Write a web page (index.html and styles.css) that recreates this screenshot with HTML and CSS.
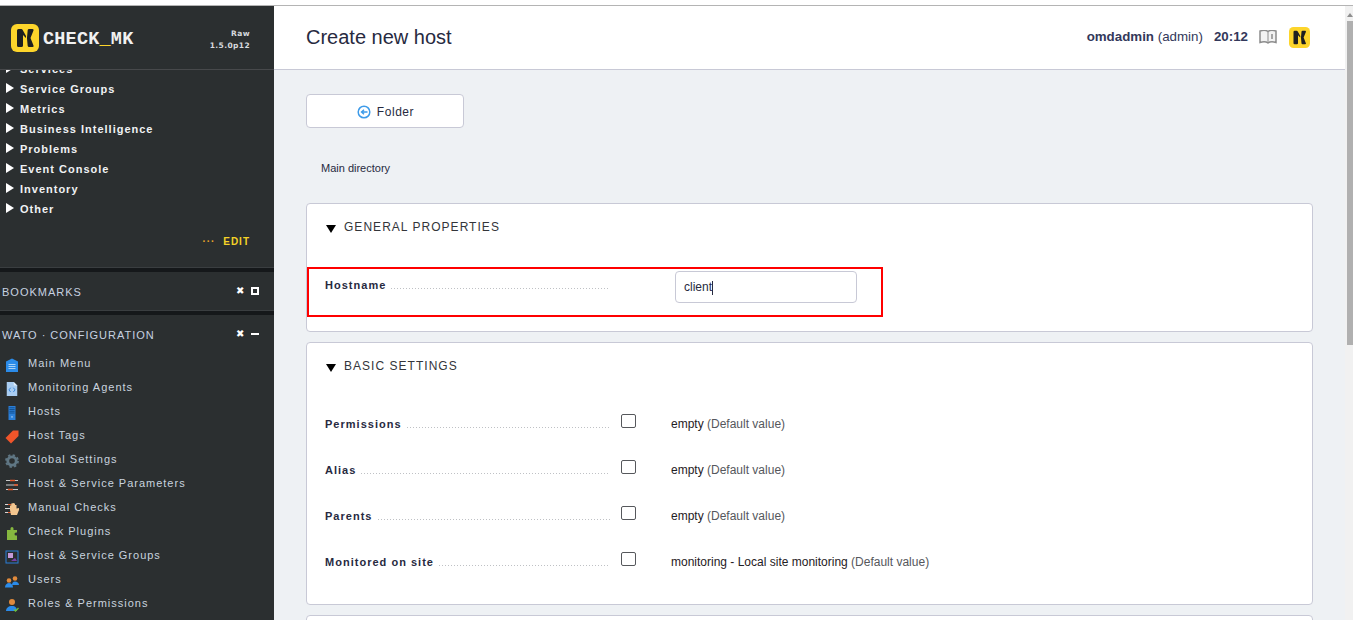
FILE: index.html
```html
<!DOCTYPE html>
<html lang="en">
<head>
    <meta charset="UTF-8">
    <title>Create new host</title>
    <link rel="stylesheet" href="styles.css">
</head>
<body>
    <div class="app">
        <aside class="sidebar">
            <div class="side-head">
                <svg class="logo" viewBox="0 0 28 28"><rect width="28" height="28" rx="6" fill="#fdd52b"/><path d="M6 6.500Q6 5 7.500 5h2.700q1 0 1.500 1L15 12v2l-3-3v10.500q0 1.500-1.500 1.500h-3Q6 23 6 21.500z" fill="#1d1f20"/><path d="M18 5h3.500q1.500 0 1 1.500L19.500 14l3 7.500q.500 1.500-1 1.500H18q-1 0-1.300-1L16 14.500v-1l.700-7.500Q17 5 18 5z" fill="#1d1f20"/></svg>
                <div class="brand">CHECK<span class="under">_</span>MK</div>
                <div class="version">Raw<br>1.5.0p12</div>
            </div>
            <div class="side-scroll">
                <ul class="views">
                    <li>Services</li>
                    <li>Service Groups</li>
                    <li>Metrics</li>
                    <li>Business Intelligence</li>
                    <li>Problems</li>
                    <li>Event Console</li>
                    <li>Inventory</li>
                    <li>Other</li>
                </ul>
                <div class="edit"><span class="dots">···</span> EDIT</div>
                <div class="separator"></div>
                <div class="snapin-title bookmarks">
                    <span>BOOKMARKS</span>
                    <span class="snapin-btns"><i class="close">✖</i><i class="square"></i></span>
                </div>
                <div class="separator"></div>
                <div class="snapin-title wato">
                    <span>WATO · CONFIGURATION</span>
                    <span class="snapin-btns"><i class="close">✖</i><i class="dash"></i></span>
                </div>
                <ul class="wato-menu">
                    <li><svg viewBox="0 0 14 14"><path d="M7 .5 13 3.500V14H1V3.500z" fill="#2b8be8"/><path d="M3.500 6.500h7M3.500 8.500h7M3.500 10.500h7" stroke="#a9d2f7"/></svg>Main Menu</li>
                    <li><svg viewBox="0 0 14 16"><path d="M1 0h8l4 4v12H1z" fill="#a9cdf2"/><path d="M9 0l4 4H9z" fill="#e4f0fb"/><path d="M5.500 6.500 3.500 9l2 2.500M8.500 6.500l2 2.500-2 2.500" stroke="#2b7fd8" fill="none"/></svg>Monitoring Agents</li>
                    <li><svg viewBox="0 0 14 16"><rect x="3" width="8" height="16" fill="#2b7fd8"/><path d="M4 2h6M4 4h6M4 6h6M4 8h6" stroke="#0f4c8c"/><rect x="6" y="12" width="2" height="1" fill="#cfe4fa"/></svg>Hosts</li>
                    <li><svg viewBox="0 0 14 14"><path d="M8 .5h5.500V6L6 13.500.5 8z" fill="#f0552a"/></svg>Host Tags</li>
                    <li><svg viewBox="0 0 14 14"><circle cx="7" cy="7" r="4.200" fill="none" stroke="#5f7683" stroke-width="2.800"/><circle cx="7" cy="7" r="6" fill="none" stroke="#5f7683" stroke-width="1.800" stroke-dasharray="2.400 2.300"/></svg>Global Settings</li>
                    <li><svg viewBox="0 0 14 14"><path d="M1 2.500h12M1 7h12M1 11.500h12" stroke="#c9c9c9"/><path d="M5 2.500h5M9 7h4M3 11.500h5" stroke="#e0562a" stroke-width="1.500"/></svg>Host &amp; Service Parameters</li>
                    <li><svg viewBox="0 0 14 14"><path d="M0 2.500h6M0 6.500h6M0 10.500h6" stroke="#d8d8d8"/><path d="M3 2.500h3M3 10.500h3" stroke="#e0562a"/><path d="M6 13 5 8V3.500h1.200V1.500h1.300V1h1.300v.5H10V3h1.500v3.500L14 6v2l-2 5z" fill="#f3c68f"/></svg>Manual Checks</li>
                    <li><svg viewBox="0 0 14 14"><path d="M2 4h3.500V2.500q0-1.500 1.500-1.500t1.500 1.500V4H12v2.500h-1q-1.500 0-1.500 1.500t1.500 1.500h1V14H2z" fill="#86b83f"/></svg>Check Plugins</li>
                    <li><svg viewBox="0 0 14 14"><rect x="1" y="1" width="12" height="12" fill="#2b2f30" stroke="#2b7fd8"/><rect x="3" y="3" width="5" height="5" fill="#c69ad8"/><path d="M6 11l4-3 2 3z" fill="#7b3fa8"/></svg>Host &amp; Service Groups</li>
                    <li><svg viewBox="0 0 14 14"><circle cx="4" cy="6.500" r="2.300" fill="#e08a3c"/><circle cx="10" cy="4.500" r="2.300" fill="#e08a3c"/><path d="M7 11c0-2 1-3.500 3-3.500s4 1.500 4 3.500z" fill="#2b8be8"/><path d="M0 13.500c0-3 2-4.500 4-4.500s4 1.500 4 4.500z" fill="#2b8be8"/></svg>Users</li>
                    <li><svg viewBox="0 0 14 14"><circle cx="7" cy="4" r="3" fill="#e08a3c"/><path d="M1 13c0-3 2.500-5 6-5s5 2 5 5z" fill="#2b8be8"/><path d="M9 11.500l1.500 1.500 3-3" stroke="#6fbf3a" stroke-width="1.300" fill="none"/></svg>Roles &amp; Permissions</li>
                </ul>
            </div>
        </aside>

        <main class="content">
            <header class="top">
                <h1>Create new host</h1>
                <div class="user-info">
                    <span><b>omdadmin</b> (admin)</span>
                    <b class="clock">20:12</b>
                    <svg class="book" viewBox="0 0 18 15"><path d="M1 1c3-1 6-1 8 .5C11 0 14 0 17 1v11.500c-3-1-6-1-8 .5-2-1.500-5-1.500-8-.5z" fill="#f2f2f2" stroke="#8c8c8c" stroke-width="1.500"/><path d="M9 1.500V13" stroke="#8c8c8c"/><path d="M13 4v5" stroke="#8c8c8c" stroke-width="1.500"/></svg>
                    <svg class="mini-logo" viewBox="0 0 28 28"><rect width="28" height="28" rx="6" fill="#fdd52b"/><path d="M6 6.500Q6 5 7.500 5h2.700q1 0 1.500 1L15 12v2l-3-3v10.500q0 1.500-1.500 1.500h-3Q6 23 6 21.500z" fill="#1d1f20"/><path d="M18 5h3.500q1.500 0 1 1.500L19.500 14l3 7.500q.500 1.500-1 1.500H18q-1 0-1.300-1L16 14.500v-1l.700-7.500Q17 5 18 5z" fill="#1d1f20"/></svg>
                </div>
            </header>

            <div class="page">
                <a class="btn-folder"><svg viewBox="0 0 14 14"><circle cx="7" cy="7" r="5.800" fill="none" stroke="#3d9be9" stroke-width="1.500"/><path d="M10.500 7H5M7 4.800 4.500 7 7 9.200" fill="none" stroke="#3d9be9" stroke-width="1.400"/></svg>Folder</a>
                <p class="breadcrumb">Main directory</p>

                <section class="card general">
                    <h2 class="card-title"><span class="tri"></span>GENERAL PROPERTIES</h2>
                    <div class="hostname-row">
                        <label class="legend"><span>Hostname</span><span class="leader"></span></label>
                        <div class="hostname-input">client<span class="caret"></span></div>
                    </div>
                </section>

                <section class="card basic">
                    <h2 class="card-title"><span class="tri"></span>BASIC SETTINGS</h2>
                    <div class="field">
                        <label class="legend"><span>Permissions</span><span class="leader"></span></label>
                        <span class="check"></span>
                        <span class="value">empty <em>(Default value)</em></span>
                    </div>
                    <div class="field">
                        <label class="legend"><span>Alias</span><span class="leader"></span></label>
                        <span class="check"></span>
                        <span class="value">empty <em>(Default value)</em></span>
                    </div>
                    <div class="field">
                        <label class="legend"><span>Parents</span><span class="leader"></span></label>
                        <span class="check"></span>
                        <span class="value">empty <em>(Default value)</em></span>
                    </div>
                    <div class="field">
                        <label class="legend"><span>Monitored on site</span><span class="leader"></span></label>
                        <span class="check"></span>
                        <span class="value">monitoring - Local site monitoring <em>(Default value)</em></span>
                    </div>
                </section>

                <section class="card last"></section>
            </div>
        </main>

        <div class="scrollbar"><div class="arrow"></div><div class="thumb"></div></div>
    </div>
</body>
</html>
```

FILE: styles.css
```css
* {
    box-sizing: border-box;
}

html, body {
    height: 100%;
    margin: 0;
    overflow: hidden;
}

body {
    background-color: #fff;
    font-family: "Liberation Sans", Arial, sans-serif;
    color: #272a3f;
}

.app {
    display: flex;
    height: 615px;
    margin-top: 5px;
    border-top: 1px solid #b4b4b4;
}

/* Sidebar */
.sidebar {
    width: 274px;
    flex: none;
    display: flex;
    flex-direction: column;
    background-color: #2b2f30;
    color: #fff;
}

.side-head {
    height: 64px;
    flex: none;
    display: flex;
    align-items: center;
    padding: 0 24px 0 11px;
    border-bottom: 1px solid #47494b;
}

.logo {
    width: 28px;
    height: 28px;
    flex: none;
}

.brand {
    margin: 3px 0 0 4px;
    font-family: "Liberation Mono", monospace;
    font-size: 18.500px;
    font-weight: bold;
    letter-spacing: .2px;
    color: #f1f1f1;
}

.under {
    color: #fdd52b;
}

.version {
    margin: 4px 0 0 auto;
    font-family: "DejaVu Sans", sans-serif;
    font-size: 7.500px;
    font-weight: bold;
    letter-spacing: .4px;
    line-height: 12px;
    text-align: right;
    color: #d7dade;
}

.side-scroll {
    flex: 1;
    overflow: hidden;
}

.views {
    list-style: none;
    margin: -11px 0 0;
    padding: 0;
}

.views li {
    position: relative;
    height: 20px;
    padding-left: 20px;
    font-size: 11px;
    font-weight: bold;
    letter-spacing: 1px;
    line-height: 20px;
    color: #f0f2f4;
}

.views li::before {
    content: "";
    position: absolute;
    left: 6px;
    top: 4px;
    border-left: 8px solid #fff;
    border-top: 5px solid transparent;
    border-bottom: 5px solid transparent;
}

.edit {
    height: 48px;
    padding: 13px 24px 0 0;
    font-size: 10px;
    font-weight: bold;
    letter-spacing: 1px;
    line-height: 20px;
    text-align: right;
    color: #f5d327;
}

.dots {
    margin-right: 4px;
    color: #e8a52a;
}

.separator {
    height: 5px;
    background-color: #15181a;
    border-top: 1px solid #3a3e40;
}

.snapin-title {
    display: flex;
    justify-content: space-between;
    padding: 0 15px 0 2px;
    font-size: 11px;
    letter-spacing: 1px;
    color: #c7d2e0;
}

.bookmarks {
    height: 38px;
    padding-top: 2px;
    align-items: center;
}

.wato {
    height: 36px;
    padding-top: 3px;
    align-items: center;
}

.snapin-btns {
    display: flex;
    align-items: center;
    gap: 7px;
    margin-top: -2px;
}

.close {
    width: 8px;
    font-size: 10px;
    font-style: normal;
    font-family: "DejaVu Sans", sans-serif;
    line-height: 10px;
    color: #fff;
}

.square {
    width: 8px;
    height: 8px;
    border: 2px solid #fff;
}

.dash {
    width: 8px;
    height: 2px;
    background-color: #fff;
}

.wato-menu {
    list-style: none;
    margin: 0;
    padding: 0;
}

.wato-menu li {
    display: flex;
    align-items: center;
    height: 24px;
    padding-left: 5px;
    font-size: 11px;
    letter-spacing: 1px;
    color: #c9d3df;
}

.wato-menu svg {
    width: 14px;
    height: 14px;
    margin-right: 9px;
    margin-top: 4px;
    flex: none;
}

/* Main area */
.content {
    flex: 1;
    min-width: 0;
    overflow: hidden;
    background-color: #eef1f4;
}

.top {
    height: 64px;
    display: flex;
    align-items: center;
    justify-content: space-between;
    padding: 0 34px 0 32px;
    background-color: #fff;
    border-bottom: 1px solid #c8c9d6;
}

h1 {
    margin: 0;
    font-size: 20px;
    font-weight: normal;
    color: #272a3f;
}

.user-info {
    display: flex;
    align-items: center;
    font-size: 13.330px;
    color: #33385a;
}

.user-info > span, .clock {
    margin-top: -2px;
}

.clock {
    margin-left: 11px;
}

.book {
    width: 18px;
    height: 15px;
    margin-left: 11px;
}

.mini-logo {
    width: 21px;
    height: 21px;
    margin: -1px 1px 0 12px;
}

.page {
    padding: 24px 32px 0;
}

.btn-folder {
    display: flex;
    align-items: center;
    justify-content: center;
    gap: 6px;
    width: 158px;
    height: 34px;
    padding-top: 2px;
    background-color: #fff;
    border: 1px solid #c8c9d6;
    border-radius: 4px;
    font-size: 12px;
    letter-spacing: .55px;
}

.btn-folder svg {
    width: 14px;
    height: 14px;
    margin-left: 1px;
}

.breadcrumb {
    height: 75px;
    margin: 0;
    padding: 34px 0 0 15px;
    font-size: 11px;
    line-height: 13px;
}

.card {
    width: 1007px;
    margin-bottom: 10px;
    background-color: #fff;
    border: 1px solid #c8c9d6;
    border-radius: 4px;
}

.general {
    height: 129px;
}

.basic {
    height: 263px;
}

.last {
    height: 40px;
}

.card-title {
    display: flex;
    align-items: center;
    height: 46px;
    margin: 0;
    padding-left: 19px;
    font-size: 12px;
    font-weight: normal;
    letter-spacing: 1.030px;
    color: #33353a;
}

.tri {
    width: 0;
    margin: 3px 8px 0 0;
    border-top: 8px solid #000;
    border-left: 5px solid transparent;
    border-right: 5px solid transparent;
}

.hostname-row {
    display: flex;
    align-items: flex-start;
    width: 576px;
    height: 50px;
    margin: 17px 0 0;
    padding: 2px 0 0 16px;
    border: 2px solid #f00;
}

.legend {
    display: flex;
    align-items: baseline;
    width: 285px;
    flex: none;
    font-size: 11px;
    font-weight: bold;
    letter-spacing: 1.020px;
    line-height: 13px;
    color: #272a3f;
}

.hostname-row .legend {
    margin-top: 8px;
}

.leader {
    flex: 1;
    height: 1px;
    margin-left: 5px;
    background-image: repeating-linear-gradient(to right, #bfc1c5 0, #bfc1c5 1px, transparent 1px, transparent 3px);
}

.hostname-input {
    width: 182px;
    height: 32px;
    margin-left: 65px;
    padding-left: 8px;
    border: 1px solid #c8c9d6;
    border-radius: 4px;
    font-size: 12px;
    line-height: 30px;
}

.caret {
    display: inline-block;
    width: 1px;
    height: 14px;
    vertical-align: middle;
    background-color: #272a3f;
}

.field {
    display: flex;
    align-items: center;
    height: 46px;
    padding-left: 18px;
}

.basic .field:first-of-type {
    margin-top: 12px;
}

.check {
    width: 15px;
    height: 14px;
    margin: -6px 0 0 11px;
    flex: none;
    border: 1px solid #56585c;
    border-radius: 2px;
    background-color: #fff;
}

.value {
    margin-left: 35px;
    font-size: 12px;
    color: #1f2024;
}

.value em {
    font-style: normal;
    color: #55575c;
}

/* Browser scrollbar */
.scrollbar {
    position: relative;
    width: 8px;
    flex: none;
    background-color: #f1f1f1;
}

.arrow {
    position: absolute;
    left: 2px;
    top: 7px;
    border-bottom: 4px solid #8f8f8f;
    border-left: 3px solid transparent;
    border-right: 3px solid transparent;
}

.thumb {
    position: absolute;
    left: 2px;
    right: 0;
    top: 15px;
    height: 324px;
    background-color: #b0b0b0;
}
```
